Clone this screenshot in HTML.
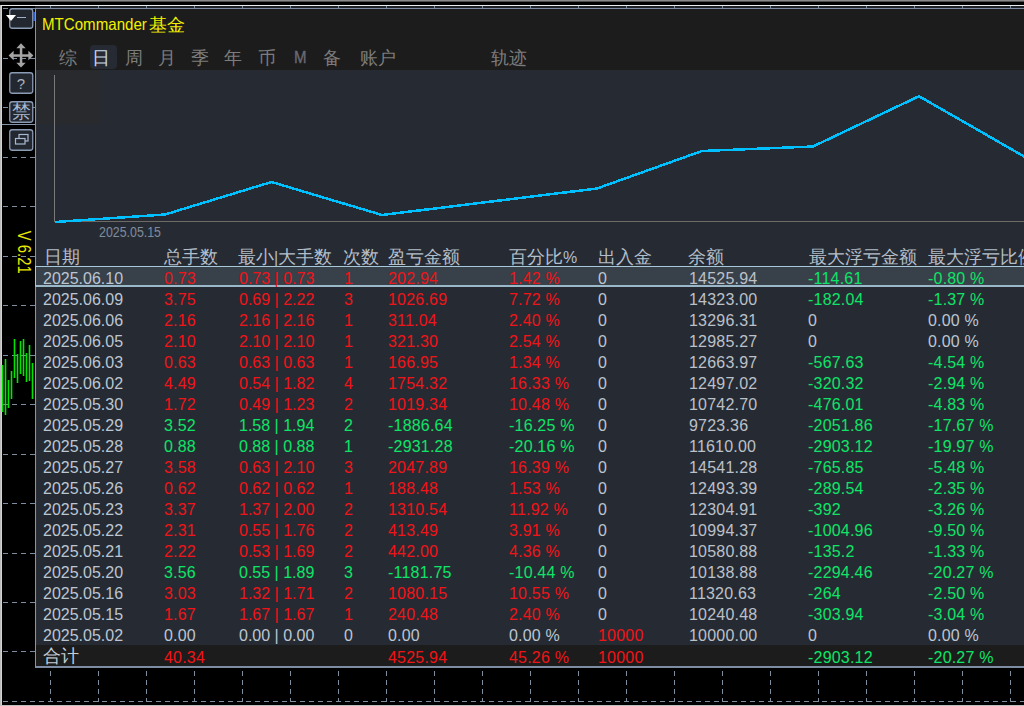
<!DOCTYPE html>
<html><head><meta charset="utf-8"><title>MTCommander</title>
<style>
html,body{margin:0;padding:0;}
body{width:1024px;height:706px;overflow:hidden;background:#000;position:relative;font-family:"Liberation Sans",sans-serif;}
.a{position:absolute;white-space:nowrap;}
svg{position:absolute;left:0;top:0;}
.t{position:absolute;white-space:nowrap;font-size:16px;line-height:21px;letter-spacing:0.2px;}
.h{position:absolute;white-space:nowrap;font-size:18px;line-height:24px;color:#b4bec9;}
.tab{position:absolute;white-space:nowrap;font-size:18px;line-height:24px;color:#747474;top:46px;}
.r{color:#f01418}.g{color:#0ee468}.w{color:#bcc6d2}.b{color:#bcc0c8}
</style></head><body>

<svg width="1024" height="706" viewBox="0 0 1024 706"><rect x="0" y="0" width="1024" height="1" fill="#8a8a8a"/><rect x="0" y="1" width="1024" height="1" fill="#505050"/><rect x="35" y="6" width="989" height="2" fill="#1f2328"/><line x1="50.5" y1="5" x2="50.5" y2="702" stroke="#7d8ea0" stroke-width="1" stroke-dasharray="5 4"/><line x1="98.5" y1="5" x2="98.5" y2="702" stroke="#7d8ea0" stroke-width="1" stroke-dasharray="5 4"/><line x1="146.5" y1="5" x2="146.5" y2="702" stroke="#7d8ea0" stroke-width="1" stroke-dasharray="5 4"/><line x1="194.5" y1="5" x2="194.5" y2="702" stroke="#7d8ea0" stroke-width="1" stroke-dasharray="5 4"/><line x1="242.5" y1="5" x2="242.5" y2="702" stroke="#7d8ea0" stroke-width="1" stroke-dasharray="5 4"/><line x1="290.5" y1="5" x2="290.5" y2="702" stroke="#7d8ea0" stroke-width="1" stroke-dasharray="5 4"/><line x1="338.5" y1="5" x2="338.5" y2="702" stroke="#7d8ea0" stroke-width="1" stroke-dasharray="5 4"/><line x1="386.5" y1="5" x2="386.5" y2="702" stroke="#7d8ea0" stroke-width="1" stroke-dasharray="5 4"/><line x1="434.5" y1="5" x2="434.5" y2="702" stroke="#7d8ea0" stroke-width="1" stroke-dasharray="5 4"/><line x1="482.5" y1="5" x2="482.5" y2="702" stroke="#7d8ea0" stroke-width="1" stroke-dasharray="5 4"/><line x1="530.5" y1="5" x2="530.5" y2="702" stroke="#7d8ea0" stroke-width="1" stroke-dasharray="5 4"/><line x1="578.5" y1="5" x2="578.5" y2="702" stroke="#7d8ea0" stroke-width="1" stroke-dasharray="5 4"/><line x1="626.5" y1="5" x2="626.5" y2="702" stroke="#7d8ea0" stroke-width="1" stroke-dasharray="5 4"/><line x1="674.5" y1="5" x2="674.5" y2="702" stroke="#7d8ea0" stroke-width="1" stroke-dasharray="5 4"/><line x1="722.5" y1="5" x2="722.5" y2="702" stroke="#7d8ea0" stroke-width="1" stroke-dasharray="5 4"/><line x1="770.5" y1="5" x2="770.5" y2="702" stroke="#7d8ea0" stroke-width="1" stroke-dasharray="5 4"/><line x1="818.5" y1="5" x2="818.5" y2="702" stroke="#7d8ea0" stroke-width="1" stroke-dasharray="5 4"/><line x1="866.5" y1="5" x2="866.5" y2="702" stroke="#7d8ea0" stroke-width="1" stroke-dasharray="5 4"/><line x1="914.5" y1="5" x2="914.5" y2="702" stroke="#7d8ea0" stroke-width="1" stroke-dasharray="5 4"/><line x1="962.5" y1="5" x2="962.5" y2="702" stroke="#7d8ea0" stroke-width="1" stroke-dasharray="5 4"/><line x1="1010.5" y1="5" x2="1010.5" y2="702" stroke="#7d8ea0" stroke-width="1" stroke-dasharray="5 4"/><line x1="3" y1="8.5" x2="1024" y2="8.5" stroke="#7d8ea0" stroke-width="1" stroke-dasharray="5 4"/><line x1="3" y1="58.5" x2="1024" y2="58.5" stroke="#7d8ea0" stroke-width="1" stroke-dasharray="5 4"/><line x1="3" y1="107.5" x2="1024" y2="107.5" stroke="#7d8ea0" stroke-width="1" stroke-dasharray="5 4"/><line x1="3" y1="157.5" x2="1024" y2="157.5" stroke="#7d8ea0" stroke-width="1" stroke-dasharray="5 4"/><line x1="3" y1="206.5" x2="1024" y2="206.5" stroke="#7d8ea0" stroke-width="1" stroke-dasharray="5 4"/><line x1="3" y1="256.5" x2="1024" y2="256.5" stroke="#7d8ea0" stroke-width="1" stroke-dasharray="5 4"/><line x1="3" y1="305.5" x2="1024" y2="305.5" stroke="#7d8ea0" stroke-width="1" stroke-dasharray="5 4"/><line x1="3" y1="355.5" x2="1024" y2="355.5" stroke="#7d8ea0" stroke-width="1" stroke-dasharray="5 4"/><line x1="3" y1="404.5" x2="1024" y2="404.5" stroke="#7d8ea0" stroke-width="1" stroke-dasharray="5 4"/><line x1="3" y1="454.5" x2="1024" y2="454.5" stroke="#7d8ea0" stroke-width="1" stroke-dasharray="5 4"/><line x1="3" y1="503.5" x2="1024" y2="503.5" stroke="#7d8ea0" stroke-width="1" stroke-dasharray="5 4"/><line x1="3" y1="553.5" x2="1024" y2="553.5" stroke="#7d8ea0" stroke-width="1" stroke-dasharray="5 4"/><line x1="3" y1="602.5" x2="1024" y2="602.5" stroke="#7d8ea0" stroke-width="1" stroke-dasharray="5 4"/><line x1="3" y1="651.5" x2="1024" y2="651.5" stroke="#7d8ea0" stroke-width="1" stroke-dasharray="5 4"/><line x1="3" y1="701.5" x2="1024" y2="701.5" stroke="#7d8ea0" stroke-width="1" stroke-dasharray="5 4"/><rect x="1" y="5" width="1023" height="1" fill="#ececec"/><rect x="0" y="5" width="1" height="701" fill="#bcbcbc"/><rect x="1" y="6" width="1" height="700" fill="#d4d4d4"/><rect x="0" y="705" width="1024" height="1" fill="#c0c0c0"/><rect x="1.70" y="365" width="1.6" height="47" fill="#00e400"/><rect x="4.70" y="359" width="1.6" height="56" fill="#00e400"/><rect x="7.70" y="380" width="1.6" height="28" fill="#00e400"/><rect x="10.70" y="371" width="1.6" height="28" fill="#00e400"/><rect x="13.70" y="339" width="1.6" height="39" fill="#00e400"/><rect x="16.70" y="354" width="1.6" height="29" fill="#00e400"/><rect x="19.70" y="341" width="1.6" height="33" fill="#00e400"/><rect x="22.70" y="339" width="1.6" height="37" fill="#00e400"/><rect x="25.70" y="353" width="1.6" height="29" fill="#00e400"/><rect x="28.70" y="345" width="1.6" height="36" fill="#00e400"/><rect x="31.70" y="363" width="1.6" height="36" fill="#00e400"/><rect x="9.75" y="8.75" width="23" height="19.50" rx="2.5" fill="#232830" stroke="#8a9bb3" stroke-width="1.3"/><rect x="9.75" y="72.75" width="23" height="20.50" rx="2.5" fill="#232830" stroke="#8a9bb3" stroke-width="1.3"/><rect x="9.75" y="101.75" width="23" height="20.50" rx="2.5" fill="#232830" stroke="#8a9bb3" stroke-width="1.3"/><rect x="9.75" y="129.75" width="23" height="20.50" rx="2.5" fill="#232830" stroke="#8a9bb3" stroke-width="1.3"/><polygon points="6,15 16,15 11,21" fill="#ffffff"/><rect x="17" y="17" width="9" height="1" fill="#9fb0c8"/><rect x="33" y="12" width="2" height="9" fill="#2f5fc8"/><g fill="#a4a4a4"><rect x="19.8" y="46" width="2.5" height="18"/><rect x="12" y="54.3" width="18" height="2.5"/><polygon points="21,43.2 16.3,48.2 25.7,48.2"/><polygon points="21,67.6 16.3,62.8 25.7,62.8"/><polygon points="8.6,55.5 13.6,50.8 13.6,60.2"/><polygon points="33.4,55.5 28.4,50.8 28.4,60.2"/></g><g fill="none" stroke="#a8b8d0" stroke-width="1.2"><rect x="19" y="134.5" width="9" height="6.5"/><rect x="15.5" y="138.5" width="9.5" height="5.5" fill="#232830"/></g><rect x="2" y="124" width="33" height="1" fill="#8494aa"/></svg>
<div class="a" style="left:12px;top:74px;width:18px;text-align:center;font-size:15px;line-height:20px;color:#aab4c4;">?</div>
<div class="a" style="left:11.5px;top:101px;font-size:18.5px;line-height:22px;color:#a8b8d0;">禁</div>
<div class="a" style="left:-1px;top:243px;width:50px;height:18px;font-size:17.5px;line-height:18px;color:#e8e800;transform:rotate(90deg) scaleX(0.85);transform-origin:25px 9px;text-align:center;">V 6.21</div>
<div class="a" style="left:35px;top:8px;width:1100px;height:657px;background:#1c1c1c;border-left:1px solid #8494aa;border-top:1px solid #7d8ca2;border-bottom:2px solid #7d8ca2;"></div>
<div class="a" style="left:36px;top:70px;width:1000px;height:576px;background:#262b33;"></div>
<div class="a" style="left:36px;top:70px;width:1px;height:576px;background:#2c3038;"></div>
<div class="a" style="left:38px;top:70px;width:62px;height:54px;background:#292a2e;"></div>
<div class="a" style="left:42px;top:14px;font-size:16.5px;line-height:20px;color:#f2f200;transform:scaleX(0.915);transform-origin:0 0;">MTCommander</div>
<div class="a" style="left:149px;top:13px;font-size:18px;line-height:24px;color:#f2f200;">基金</div>
<div class="a" style="left:90px;top:45px;width:27px;height:24px;background:#262b33;border-radius:4px;"></div>
<div class="tab" style="left:59px;color:#7c7c7c">综</div>
<div class="tab" style="left:92px;color:#c8d8ec">日</div>
<div class="tab" style="left:125px;color:#7c7c7c">周</div>
<div class="tab" style="left:158px;color:#7c7c7c">月</div>
<div class="tab" style="left:191px;color:#7c7c7c">季</div>
<div class="tab" style="left:224px;color:#7c7c7c">年</div>
<div class="tab" style="left:258px;color:#7c7c7c">币</div>
<div class="tab" style="left:323px;color:#7c7c7c">备</div>
<div class="tab" style="left:360px;color:#7c7c7c">账户</div>
<div class="tab" style="left:491px;color:#7c7c7c">轨迹</div>
<div class="a" style="left:294px;top:49px;font-size:15px;line-height:16px;color:#6a6a74;-webkit-text-stroke:0.3px #6a6a74;transform:scaleY(1.12);transform-origin:0 3px;">M</div>
<svg width="1024" height="706" viewBox="0 0 1024 706"><rect x="54" y="75" width="1" height="147" fill="#7a7a7a"/><rect x="54" y="221" width="970" height="1" fill="#6e6a66"/><polyline points="55,222 165,214.5 271.5,182 382,215 597,188.5 702,151 813,146.5 919,96.2 1029,159.3" fill="none" stroke="#00c0ff" stroke-width="2.5" shape-rendering="crispEdges"/></svg>
<div class="a" style="left:98.5px;top:224px;font-size:14px;line-height:16px;color:#7e8c9c;transform:scaleX(0.885);transform-origin:0 0;">2025.05.15</div>
<div class="h" style="left:44px;top:245px;">日期</div>
<div class="h" style="left:164px;top:245px;">总手数</div>
<div class="h" style="left:238px;top:245px;">最小<span style="font-size:16px">|</span>大手数</div>
<div class="h" style="left:343px;top:245px;">次数</div>
<div class="h" style="left:388px;top:245px;">盈亏金额</div>
<div class="h" style="left:509px;top:245px;">百分比<span style="font-size:16px">%</span></div>
<div class="h" style="left:598px;top:245px;">出入金</div>
<div class="h" style="left:688px;top:245px;">余额</div>
<div class="h" style="left:809px;top:245px;">最大浮亏金额</div>
<div class="h" style="left:928px;top:245px;">最大浮亏比例</div>
<div class="a" style="left:35px;top:266px;width:1100px;height:18px;background:#38404a;border-left:1px solid #a6c8d8;border-top:1px solid #a6c8d8;border-bottom:2px solid #9ab8c8;"></div>
<div class="a" style="left:36px;top:645px;width:1000px;height:21px;background:#1c1c1c;"></div>
<div class="t w" style="left:43px;top:268px;letter-spacing:0;">2025.06.10</div>
<div class="t r" style="left:164px;top:268px;">0.73</div>
<div class="t r" style="left:239px;top:268px;letter-spacing:0;">0.73 | 0.73</div>
<div class="t r" style="left:344px;top:268px;">1</div>
<div class="t r" style="left:388px;top:268px;">202.94</div>
<div class="t r" style="left:509px;top:268px;">1.42 %</div>
<div class="t w" style="left:598px;top:268px;">0</div>
<div class="t b" style="left:689px;top:268px;">14525.94</div>
<div class="t g" style="left:808px;top:268px;">-114.61</div>
<div class="t g" style="left:928px;top:268px;">-0.80 %</div>
<div class="t w" style="left:43px;top:289px;letter-spacing:0;">2025.06.09</div>
<div class="t r" style="left:164px;top:289px;">3.75</div>
<div class="t r" style="left:239px;top:289px;letter-spacing:0;">0.69 | 2.22</div>
<div class="t r" style="left:344px;top:289px;">3</div>
<div class="t r" style="left:388px;top:289px;">1026.69</div>
<div class="t r" style="left:509px;top:289px;">7.72 %</div>
<div class="t w" style="left:598px;top:289px;">0</div>
<div class="t b" style="left:689px;top:289px;">14323.00</div>
<div class="t g" style="left:808px;top:289px;">-182.04</div>
<div class="t g" style="left:928px;top:289px;">-1.37 %</div>
<div class="t w" style="left:43px;top:310px;letter-spacing:0;">2025.06.06</div>
<div class="t r" style="left:164px;top:310px;">2.16</div>
<div class="t r" style="left:239px;top:310px;letter-spacing:0;">2.16 | 2.16</div>
<div class="t r" style="left:344px;top:310px;">1</div>
<div class="t r" style="left:388px;top:310px;">311.04</div>
<div class="t r" style="left:509px;top:310px;">2.40 %</div>
<div class="t w" style="left:598px;top:310px;">0</div>
<div class="t b" style="left:689px;top:310px;">13296.31</div>
<div class="t w" style="left:808px;top:310px;">0</div>
<div class="t w" style="left:928px;top:310px;">0.00 %</div>
<div class="t w" style="left:43px;top:331px;letter-spacing:0;">2025.06.05</div>
<div class="t r" style="left:164px;top:331px;">2.10</div>
<div class="t r" style="left:239px;top:331px;letter-spacing:0;">2.10 | 2.10</div>
<div class="t r" style="left:344px;top:331px;">1</div>
<div class="t r" style="left:388px;top:331px;">321.30</div>
<div class="t r" style="left:509px;top:331px;">2.54 %</div>
<div class="t w" style="left:598px;top:331px;">0</div>
<div class="t b" style="left:689px;top:331px;">12985.27</div>
<div class="t w" style="left:808px;top:331px;">0</div>
<div class="t w" style="left:928px;top:331px;">0.00 %</div>
<div class="t w" style="left:43px;top:352px;letter-spacing:0;">2025.06.03</div>
<div class="t r" style="left:164px;top:352px;">0.63</div>
<div class="t r" style="left:239px;top:352px;letter-spacing:0;">0.63 | 0.63</div>
<div class="t r" style="left:344px;top:352px;">1</div>
<div class="t r" style="left:388px;top:352px;">166.95</div>
<div class="t r" style="left:509px;top:352px;">1.34 %</div>
<div class="t w" style="left:598px;top:352px;">0</div>
<div class="t b" style="left:689px;top:352px;">12663.97</div>
<div class="t g" style="left:808px;top:352px;">-567.63</div>
<div class="t g" style="left:928px;top:352px;">-4.54 %</div>
<div class="t w" style="left:43px;top:373px;letter-spacing:0;">2025.06.02</div>
<div class="t r" style="left:164px;top:373px;">4.49</div>
<div class="t r" style="left:239px;top:373px;letter-spacing:0;">0.54 | 1.82</div>
<div class="t r" style="left:344px;top:373px;">4</div>
<div class="t r" style="left:388px;top:373px;">1754.32</div>
<div class="t r" style="left:509px;top:373px;">16.33 %</div>
<div class="t w" style="left:598px;top:373px;">0</div>
<div class="t b" style="left:689px;top:373px;">12497.02</div>
<div class="t g" style="left:808px;top:373px;">-320.32</div>
<div class="t g" style="left:928px;top:373px;">-2.94 %</div>
<div class="t w" style="left:43px;top:394px;letter-spacing:0;">2025.05.30</div>
<div class="t r" style="left:164px;top:394px;">1.72</div>
<div class="t r" style="left:239px;top:394px;letter-spacing:0;">0.49 | 1.23</div>
<div class="t r" style="left:344px;top:394px;">2</div>
<div class="t r" style="left:388px;top:394px;">1019.34</div>
<div class="t r" style="left:509px;top:394px;">10.48 %</div>
<div class="t w" style="left:598px;top:394px;">0</div>
<div class="t b" style="left:689px;top:394px;">10742.70</div>
<div class="t g" style="left:808px;top:394px;">-476.01</div>
<div class="t g" style="left:928px;top:394px;">-4.83 %</div>
<div class="t w" style="left:43px;top:415px;letter-spacing:0;">2025.05.29</div>
<div class="t g" style="left:164px;top:415px;">3.52</div>
<div class="t g" style="left:239px;top:415px;letter-spacing:0;">1.58 | 1.94</div>
<div class="t g" style="left:344px;top:415px;">2</div>
<div class="t g" style="left:388px;top:415px;">-1886.64</div>
<div class="t g" style="left:509px;top:415px;">-16.25 %</div>
<div class="t w" style="left:598px;top:415px;">0</div>
<div class="t b" style="left:689px;top:415px;">9723.36</div>
<div class="t g" style="left:808px;top:415px;">-2051.86</div>
<div class="t g" style="left:928px;top:415px;">-17.67 %</div>
<div class="t w" style="left:43px;top:436px;letter-spacing:0;">2025.05.28</div>
<div class="t g" style="left:164px;top:436px;">0.88</div>
<div class="t g" style="left:239px;top:436px;letter-spacing:0;">0.88 | 0.88</div>
<div class="t g" style="left:344px;top:436px;">1</div>
<div class="t g" style="left:388px;top:436px;">-2931.28</div>
<div class="t g" style="left:509px;top:436px;">-20.16 %</div>
<div class="t w" style="left:598px;top:436px;">0</div>
<div class="t b" style="left:689px;top:436px;">11610.00</div>
<div class="t g" style="left:808px;top:436px;">-2903.12</div>
<div class="t g" style="left:928px;top:436px;">-19.97 %</div>
<div class="t w" style="left:43px;top:457px;letter-spacing:0;">2025.05.27</div>
<div class="t r" style="left:164px;top:457px;">3.58</div>
<div class="t r" style="left:239px;top:457px;letter-spacing:0;">0.63 | 2.10</div>
<div class="t r" style="left:344px;top:457px;">3</div>
<div class="t r" style="left:388px;top:457px;">2047.89</div>
<div class="t r" style="left:509px;top:457px;">16.39 %</div>
<div class="t w" style="left:598px;top:457px;">0</div>
<div class="t b" style="left:689px;top:457px;">14541.28</div>
<div class="t g" style="left:808px;top:457px;">-765.85</div>
<div class="t g" style="left:928px;top:457px;">-5.48 %</div>
<div class="t w" style="left:43px;top:478px;letter-spacing:0;">2025.05.26</div>
<div class="t r" style="left:164px;top:478px;">0.62</div>
<div class="t r" style="left:239px;top:478px;letter-spacing:0;">0.62 | 0.62</div>
<div class="t r" style="left:344px;top:478px;">1</div>
<div class="t r" style="left:388px;top:478px;">188.48</div>
<div class="t r" style="left:509px;top:478px;">1.53 %</div>
<div class="t w" style="left:598px;top:478px;">0</div>
<div class="t b" style="left:689px;top:478px;">12493.39</div>
<div class="t g" style="left:808px;top:478px;">-289.54</div>
<div class="t g" style="left:928px;top:478px;">-2.35 %</div>
<div class="t w" style="left:43px;top:499px;letter-spacing:0;">2025.05.23</div>
<div class="t r" style="left:164px;top:499px;">3.37</div>
<div class="t r" style="left:239px;top:499px;letter-spacing:0;">1.37 | 2.00</div>
<div class="t r" style="left:344px;top:499px;">2</div>
<div class="t r" style="left:388px;top:499px;">1310.54</div>
<div class="t r" style="left:509px;top:499px;">11.92 %</div>
<div class="t w" style="left:598px;top:499px;">0</div>
<div class="t b" style="left:689px;top:499px;">12304.91</div>
<div class="t g" style="left:808px;top:499px;">-392</div>
<div class="t g" style="left:928px;top:499px;">-3.26 %</div>
<div class="t w" style="left:43px;top:520px;letter-spacing:0;">2025.05.22</div>
<div class="t r" style="left:164px;top:520px;">2.31</div>
<div class="t r" style="left:239px;top:520px;letter-spacing:0;">0.55 | 1.76</div>
<div class="t r" style="left:344px;top:520px;">2</div>
<div class="t r" style="left:388px;top:520px;">413.49</div>
<div class="t r" style="left:509px;top:520px;">3.91 %</div>
<div class="t w" style="left:598px;top:520px;">0</div>
<div class="t b" style="left:689px;top:520px;">10994.37</div>
<div class="t g" style="left:808px;top:520px;">-1004.96</div>
<div class="t g" style="left:928px;top:520px;">-9.50 %</div>
<div class="t w" style="left:43px;top:541px;letter-spacing:0;">2025.05.21</div>
<div class="t r" style="left:164px;top:541px;">2.22</div>
<div class="t r" style="left:239px;top:541px;letter-spacing:0;">0.53 | 1.69</div>
<div class="t r" style="left:344px;top:541px;">2</div>
<div class="t r" style="left:388px;top:541px;">442.00</div>
<div class="t r" style="left:509px;top:541px;">4.36 %</div>
<div class="t w" style="left:598px;top:541px;">0</div>
<div class="t b" style="left:689px;top:541px;">10580.88</div>
<div class="t g" style="left:808px;top:541px;">-135.2</div>
<div class="t g" style="left:928px;top:541px;">-1.33 %</div>
<div class="t w" style="left:43px;top:562px;letter-spacing:0;">2025.05.20</div>
<div class="t g" style="left:164px;top:562px;">3.56</div>
<div class="t g" style="left:239px;top:562px;letter-spacing:0;">0.55 | 1.89</div>
<div class="t g" style="left:344px;top:562px;">3</div>
<div class="t g" style="left:388px;top:562px;">-1181.75</div>
<div class="t g" style="left:509px;top:562px;">-10.44 %</div>
<div class="t w" style="left:598px;top:562px;">0</div>
<div class="t b" style="left:689px;top:562px;">10138.88</div>
<div class="t g" style="left:808px;top:562px;">-2294.46</div>
<div class="t g" style="left:928px;top:562px;">-20.27 %</div>
<div class="t w" style="left:43px;top:583px;letter-spacing:0;">2025.05.16</div>
<div class="t r" style="left:164px;top:583px;">3.03</div>
<div class="t r" style="left:239px;top:583px;letter-spacing:0;">1.32 | 1.71</div>
<div class="t r" style="left:344px;top:583px;">2</div>
<div class="t r" style="left:388px;top:583px;">1080.15</div>
<div class="t r" style="left:509px;top:583px;">10.55 %</div>
<div class="t w" style="left:598px;top:583px;">0</div>
<div class="t b" style="left:689px;top:583px;">11320.63</div>
<div class="t g" style="left:808px;top:583px;">-264</div>
<div class="t g" style="left:928px;top:583px;">-2.50 %</div>
<div class="t w" style="left:43px;top:604px;letter-spacing:0;">2025.05.15</div>
<div class="t r" style="left:164px;top:604px;">1.67</div>
<div class="t r" style="left:239px;top:604px;letter-spacing:0;">1.67 | 1.67</div>
<div class="t r" style="left:344px;top:604px;">1</div>
<div class="t r" style="left:388px;top:604px;">240.48</div>
<div class="t r" style="left:509px;top:604px;">2.40 %</div>
<div class="t w" style="left:598px;top:604px;">0</div>
<div class="t b" style="left:689px;top:604px;">10240.48</div>
<div class="t g" style="left:808px;top:604px;">-303.94</div>
<div class="t g" style="left:928px;top:604px;">-3.04 %</div>
<div class="t w" style="left:43px;top:625px;letter-spacing:0;">2025.05.02</div>
<div class="t w" style="left:164px;top:625px;">0.00</div>
<div class="t w" style="left:239px;top:625px;letter-spacing:0;">0.00 | 0.00</div>
<div class="t w" style="left:344px;top:625px;">0</div>
<div class="t w" style="left:388px;top:625px;">0.00</div>
<div class="t w" style="left:509px;top:625px;">0.00 %</div>
<div class="t r" style="left:598px;top:625px;">10000</div>
<div class="t b" style="left:689px;top:625px;">10000.00</div>
<div class="t w" style="left:808px;top:625px;">0</div>
<div class="t w" style="left:928px;top:625px;">0.00 %</div>
<div class="h" style="left:43px;top:644px;color:#c4ccd8">合计</div>
<div class="t r" style="left:164px;top:647px;">40.34</div>
<div class="t r" style="left:388px;top:647px;">4525.94</div>
<div class="t r" style="left:509px;top:647px;">45.26 %</div>
<div class="t r" style="left:598px;top:647px;">10000</div>
<div class="t g" style="left:808px;top:647px;">-2903.12</div>
<div class="t g" style="left:928px;top:647px;">-20.27 %</div>
</body></html>
